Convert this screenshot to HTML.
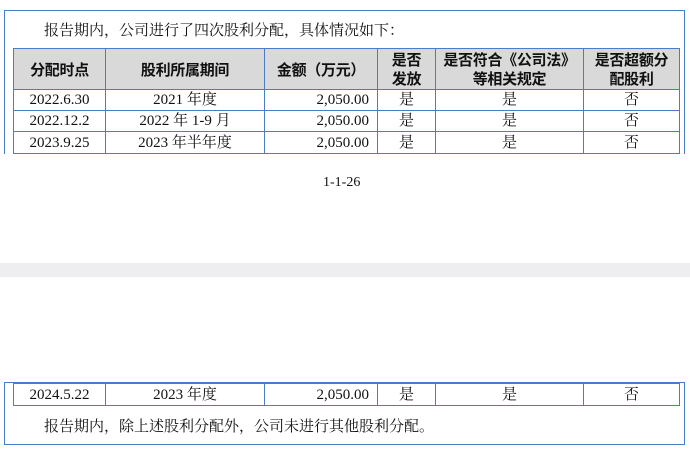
<!DOCTYPE html>
<html><head><meta charset="utf-8"><style>
*{margin:0;padding:0;box-sizing:border-box}
body{width:690px;height:449px;background:#fff;position:relative;overflow:hidden;font-family:"Liberation Serif","Noto Serif CJK SC",serif;color:#111}
.box{position:absolute;left:4px;width:681px;border:1.5px solid #4a7cc7}
.p{position:absolute;font-size:15px;white-space:nowrap}
table{position:absolute;left:13px;border-collapse:collapse;table-layout:fixed;font-size:15px}
td,th{border:1.5px solid #4a7cc7;text-align:center;padding:0;line-height:18px}
th{background:#d9d9d9;font-family:"Noto Sans CJK SC",sans-serif;font-weight:bold;font-size:15px;line-height:19px;letter-spacing:-0.3px}
td.r{text-align:right;padding-right:8px}
</style></head><body>
<div class="box" style="top:10px;height:150px;border-bottom:none"></div>
<div class="p" style="left:44px;top:19px">报告期内，公司进行了四次股利分配，具体情况如下：</div>
<table style="top:48px;width:666px">
<colgroup><col style="width:92px"><col style="width:159px"><col style="width:113px"><col style="width:58px"><col style="width:148px"><col style="width:96px"></colgroup>
<tr style="height:41px"><th>分配时点</th><th>股利所属期间</th><th>金额（万元）</th><th>是否<br>发放</th><th>是否符合《公司法》<br>等相关规定</th><th>是否超额分<br>配股利</th></tr>
<tr style="height:21px"><td>2022.6.30</td><td>2021 年度</td><td class="r">2,050.00</td><td>是</td><td>是</td><td>否</td></tr>
<tr style="height:21px"><td>2022.12.2</td><td>2022 年 1-9 月</td><td class="r">2,050.00</td><td>是</td><td>是</td><td>否</td></tr>
<tr style="height:22px"><td>2023.9.25</td><td>2023 年半年度</td><td class="r">2,050.00</td><td>是</td><td>是</td><td>否</td></tr>
</table>
<div style="position:absolute;left:0;top:154px;width:690px;height:10px;background:#fff"></div>
<div class="p" style="left:323px;top:175px;font-size:14px">1-1-26</div>
<div style="position:absolute;left:0;top:263px;width:690px;height:14px;background:#eeeef0"></div>
<div class="box" style="top:382px;height:63px"></div>
<table style="top:383px;width:666px">
<colgroup><col style="width:92px"><col style="width:159px"><col style="width:113px"><col style="width:58px"><col style="width:148px"><col style="width:96px"></colgroup>
<tr style="height:22px"><td>2024.5.22</td><td>2023 年度</td><td class="r">2,050.00</td><td>是</td><td>是</td><td>否</td></tr>
</table>
<div class="p" style="left:44px;top:415px">报告期内，除上述股利分配外，公司未进行其他股利分配。</div>
</body></html>
